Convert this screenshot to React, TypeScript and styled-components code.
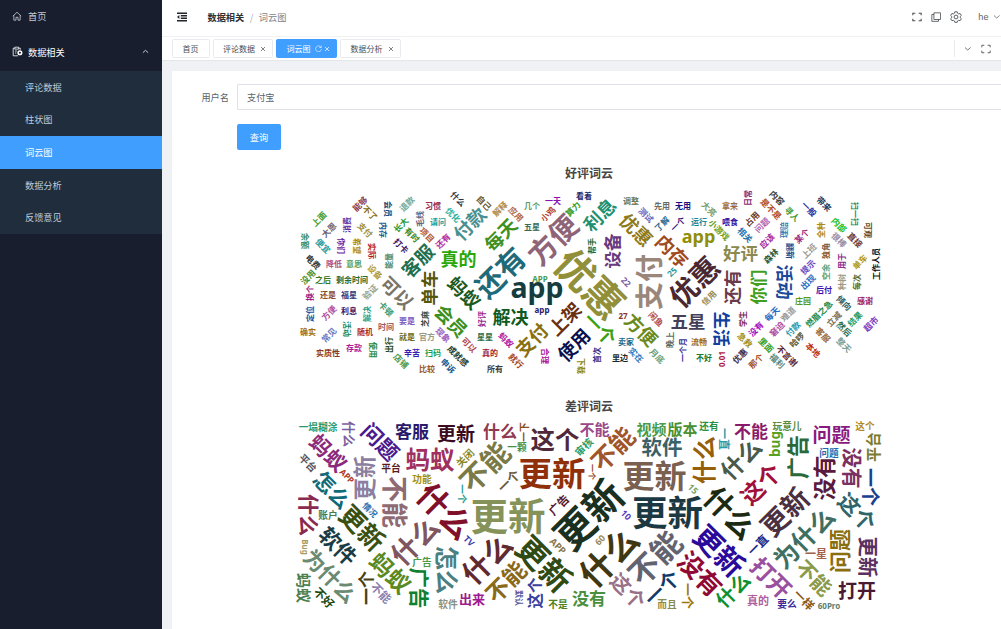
import React from 'react';
import styled, { createGlobalStyle } from 'styled-components';

const Global = createGlobalStyle`
  * { box-sizing: border-box; }
  html, body { margin: 0; padding: 0; overflow: hidden; }
  body { font-family: 'Noto Sans CJK SC', sans-serif; font-size: 9.2px; color: #606266; }
`;

const Shell = styled.div`
  display: flex;
  width: 1001px;
  height: 629px;
  overflow: hidden;
`;

const Sidebar = styled.nav`
  flex: 0 0 162px;
  background: #191e2f;
  color: #c3c8d2;
`;

const MenuRow = styled.div<{ $strong?: boolean }>`
  display: flex;
  align-items: center;
  gap: ${p => (p.$strong ? 5 : 6)}px;
  height: ${p => (p.$strong ? 39 : 32)}px;
  padding: 0 13.5px 0 12px;
  color: ${p => (p.$strong ? '#ffffff' : '#c3c8d2')};
  svg:last-child:not(:first-child) { margin-left: auto; }
`;

const SubMenu = styled.div`
  display: flex;
  flex-direction: column;
  height: 163px;
  background: #1f2d3d;
`;

const SubItem = styled.div<{ $active?: boolean }>`
  flex: 1;
  display: flex;
  align-items: center;
  padding: 0 0 1px 25px;
  color: ${p => (p.$active ? '#ffffff' : '#bfcbd9')};
  background: ${p => (p.$active ? '#409eff' : 'transparent')};
`;

const Main = styled.main`
  flex: 1;
  min-width: 0;
  display: flex;
  flex-direction: column;
  background: #eff1f5;
`;

const Header = styled.header`
  display: flex;
  align-items: center;
  height: 37px;
  padding: 0 1px 2px 14px;
  background: #fff;
  border-bottom: 1px solid #f0f1f3;
`;

const Crumbs = styled.div`
  display: flex;
  gap: 5.5px;
  margin-left: 19.5px;
  color: #7b7e84;
  b { color: #303133; font-weight: 700; }
  i { color: #a8abb2; font-style: normal; }
`;

const Tools = styled.div`
  display: flex;
  align-items: center;
  gap: 9px;
  margin-left: auto;
  color: #4a4d52;
`;

const User = styled.span`
  display: flex;
  align-items: center;
  gap: 4px;
  margin-left: 7.5px;
  color: #606266;
  font-family: 'Liberation Sans', sans-serif;
  white-space: nowrap;
`;

const TabBar = styled.div`
  display: flex;
  align-items: center;
  gap: 3px;
  height: 24px;
  padding-left: 10px;
  background: #fff;
  border-bottom: 1px solid #e4e6ea;
`;

const Tab = styled.div<{ $active?: boolean; $w: number }>`
  display: flex;
  align-items: center;
  justify-content: space-between;
  width: ${p => p.$w}px;
  height: 18.5px;
  padding: 0 6px 0 9.5px;
  border: 1px solid ${p => (p.$active ? '#409eff' : '#e8eaee')};
  border-radius: 1.5px;
  background: ${p => (p.$active ? '#409eff' : '#fff')};
  color: ${p => (p.$active ? '#fff' : '#4c4f55')};
  font-size: 8px;
  white-space: nowrap;
`;

const TabIcons = styled.span`
  display: flex;
  align-items: center;
  gap: 2px;
`;

const TabTools = styled.div`
  display: flex;
  align-items: center;
  gap: 10px;
  height: 17px;
  margin-left: auto;
  padding: 0 10px 0 9px;
  border-left: 1px solid #e8eaee;
  color: #606266;
`;

const Card = styled.section`
  flex: 1;
  margin: 10px 0 0 10px;
  padding-top: 13px;
  background: #fff;
  overflow: hidden;
`;

const FormRow = styled.div`
  display: flex;
  align-items: center;
  height: 26px;
  margin-bottom: 14px;
`;

const Label = styled.label`
  width: 65px;
  padding-right: 8px;
  text-align: right;
`;

const Input = styled.div`
  flex: 1;
  display: flex;
  align-items: center;
  height: 26px;
  padding-left: 9px;
  border: 1px solid #dfe2e8;
  border-right: 0;
  border-radius: 2px 0 0 2px;
`;

const Button = styled.button`
  width: 44px;
  height: 26px;
  margin-left: 65px;
  padding: 0;
  border: 0;
  border-radius: 2px;
  background: #409eff;
  color: #fff;
  font: inherit;
`;

const Chart = styled.svg`
  display: block;
  width: 829px;
  height: 233px;
  font-family: 'Noto Sans', 'Noto Sans CJK SC', sans-serif;
  font-weight: 700;
`;

const Charts = styled.div`
  margin-top: -4px;
`;

type Word = [string, number, number, number, number, string];

const praise: Word[] = [
  ['能够', 360, 204, 8, -45, '#8b3a4a'], ['不了', 370, 213, 8, 45, '#8a6d14'], ['会员', 388, 209, 8, 90, '#1a4a7a'],
  ['退款', 407, 204, 8, -45, '#6fa898'], ['习惯', 433, 206, 8, 0, '#9a2a4a'], ['毛线', 420, 219, 8, -90, '#5a6a8a'],
  ['请问', 438, 222, 8, 0, '#1aa0a0'], ['上面', 319, 219, 8, -45, '#4aa030'], ['大恩', 329, 230, 8, -45, '#6a6070'],
  ['消费', 347, 225, 8, -90, '#5a2aa0'], ['支付', 365, 230, 8, 45, '#a09040'], ['内存', 383, 230, 8, 90, '#1a5a90'],
  ['长大', 401, 225, 8, -45, '#2a9a30'], ['有时', 412, 235, 8, 45, '#3a8a2a'], ['项目', 427, 235, 8, 45, '#b05a3a'],
  ['余额', 305, 241, 8, 90, '#2a8a6a'], ['便宜', 323, 246, 8, 45, '#2a9a9a'], ['你们', 341, 246, 8, 90, '#6a20a0'],
  ['希望', 357, 246, 8, 90, '#b08a10'], ['实际', 372, 251, 8, 90, '#b01a2a'], ['打卡', 401, 246, 8, 45, '#3a1060'],
  ['还有', 443, 241, 8, -45, '#b02aa0'], ['客服', 418, 261, 17.5, -45, '#1f7050'], ['能量', 389, 261, 8, -90, '#4a8a70'],
  ['电费', 313, 262, 8, 45, '#303a3a'], ['降低', 334, 264, 8, 0, '#b05080'], ['意思', 354, 264, 8, 0, '#50a060'],
  ['没用', 308, 277, 8, -45, '#4a9030'], ['之后', 323, 280, 8, 0, '#3a7a20'], ['剩余时间', 352, 280, 8, 0, '#2a6a2a'],
  ['设备', 375, 272, 8, 45, '#b09a40'], ['可以', 397, 293, 17.5, 45, '#7a7568'], ['单车', 430, 288, 17.5, -90, '#55560a'],
  ['换个', 310, 293, 8, -90, '#a01a80'], ['还是', 328, 295, 8, 0, '#8a4a30'], ['福星', 349, 295, 8, 0, '#2a3a80'],
  ['验证', 370, 292, 8, -45, '#90a088'], ['定位', 310, 314, 8, -90, '#1a50a0'], ['方便', 329, 313, 8, -45, '#b050a0'],
  ['利息', 349, 311, 8, 0, '#4a1060'], ['解决', 367, 314, 8, -90, '#2aa08a'], ['卡顿', 386, 309, 8, 45, '#3a9a70'],
  ['确实', 308, 332, 8, 0, '#a07010'], ['常见', 329, 335, 8, -45, '#6a7ac0'], ['活动', 347, 329, 8, 90, '#1a8a60'],
  ['随机', 365, 332, 8, 0, '#b02a1a'], ['时间', 386, 327, 8, 0, '#9a5a60'], ['要是', 407, 321, 8, 0, '#7a5ac0'],
  ['芝麻', 425, 319, 8, -90, '#3a4a3a'], ['实质性', 328, 353, 8, 0, '#8a3a20'], ['存款', 354, 348, 8, 0, '#b01a90'],
  ['使用', 373, 350, 8, 90, '#2a8a40'], ['出行', 389, 345, 8, -90, '#2a4a20'], ['就是', 407, 337, 8, 0, '#6a6a20'],
  ['官方', 427, 337, 8, 0, '#9a9a80'], ['店铺', 401, 361, 8, 45, '#4a9a50'], ['辛苦', 412, 353, 8, 0, '#3a1ab0'],
  ['扫码', 433, 353, 8, 0, '#1aa050'], ['比较', 427, 369, 8, 0, '#a05a20'],
  ['什么', 458, 199, 8, 45, '#303040'], ['优化', 453, 215, 8, 45, '#2ab0a0'], ['付款', 470, 224, 17.5, -45, '#4a9090'],
  ['自己', 484, 203, 8, 45, '#6a5a30'], ['解释', 500, 209, 8, -45, '#b08a4a'], ['应用', 516, 214, 8, 45, '#b06a50'],
  ['几个', 532, 206, 8, 0, '#5a9a6a'], ['一天', 553, 201, 8, 0, '#8a10b0'], ['算力', 573, 209, 8, -45, '#3a9a1a'],
  ['小鸡', 548, 214, 8, -45, '#b0402a'], ['五星', 532, 227, 8, 0, '#3a6a50'], ['每天', 501, 235, 17.5, -45, '#3f9020'],
  ['真的', 458.5, 259, 18, 0, '#2aa80a'], ['还有', 500.5, 272.5, 27, -45, '#1f6a78'], ['方便', 553, 240, 27, -45, '#8f6478'],
  ['优惠', 589.5, 284, 37.5, 45, '#918f3a'], ['蚂蚁', 464, 293, 17.5, 45, '#1a5a20'], ['app', 537, 292, 28.5, 0, '#153d40'],
  ['APP', 540, 279, 8, 0, '#4a9a50'], ['app', 542, 311, 8, 0, '#2a1a70'], ['会员', 451, 321, 17.5, 45, '#3a9020'],
  ['好评', 482, 319, 8, -90, '#9a2a90'], ['解决', 510.5, 317, 18, 0, '#0f5a20'], ['现象', 443, 335, 8, 45, '#9a60c0'],
  ['星星', 485, 337, 8, 0, '#1f7050'], ['蚂蚁', 506, 340, 8, 45, '#b0109a'], ['支付', 532, 340, 17.5, -45, '#8a7010'],
  ['上架', 565, 319, 17.5, -45, '#6a2f10'], ['可以', 469, 345, 8, 45, '#b04a50'], ['成就感', 458, 356, 8, 45, '#203a30'],
  ['真的', 490, 353, 8, 0, '#a01a30'], ['就行', 516, 361, 8, 45, '#a0401a'], ['合理', 545, 356, 8, 90, '#b010a0'],
  ['申诉', 448, 366, 8, 45, '#1a5a90'], ['所有', 495, 369, 8, 0, '#3a3a3a'], ['使用', 574, 345, 17.5, -45, '#0a1050'],
  ['下载', 581, 366, 8, 90, '#8a8a10'],
  ['看着', 584, 196, 8, 0, '#1a2a70'], ['利息', 600, 215, 17.5, -45, '#1f9070'], ['调整', 631, 201, 8, 0, '#6a7a5a'],
  ['测试', 646, 215, 8, 45, '#6a6ac0'], ['先用', 662, 206, 8, 0, '#6a6a60'], ['无用', 683, 206, 8, 0, '#1a1080'],
  ['大亮', 709, 209, 8, 45, '#7aa070'], ['拿来', 730, 206, 8, 0, '#a06a40'], ['优惠', 636, 230, 17.5, 45, '#8f7a1a'],
  ['了解', 662, 224, 8, -45, '#2a6a90'], ['一个', 678, 224, 8, -45, '#3a1a80'], ['运行', 699, 222, 8, 0, '#1a8a9a'],
  ['小游戏', 719, 230, 8, 45, '#6aa020'], ['喂食', 730, 222, 8, 0, '#3a10a0'], ['帮手', 592, 246, 8, -90, '#1a6a30'],
  ['设备', 613, 251, 17.5, -90, '#6a3a80'], ['内存', 672, 251, 17.5, 45, '#a04a20'], ['app', 698.5, 239, 18, 0, '#8f8f0a'],
  ['好评', 740.5, 254, 17.5, 0, '#8a8a50'], ['支付', 649.5, 282, 28, -90, '#9a877a'], ['25', 672, 272, 8, -45, '#2a9aa0'],
  ['22', 626, 282, 8, 45, '#7a5aa0'], ['优惠', 694.5, 282, 27, -45, '#4a2832'], ['信用', 709, 298, 8, -45, '#9a8a50'],
  ['27', 623, 316, 8, 0, '#8a3a2a'], ['方便', 641, 330, 17.5, 45, '#6a8a20'], ['一个', 600, 329, 17.5, 45, '#3aa010'],
  ['闲鱼', 656, 319, 8, 45, '#b05050'], ['五星', 688, 322, 17.5, 0, '#453f58'], ['生活', 721, 329, 17.5, 90, '#0f40a0'],
  ['卖家', 626, 342, 8, 0, '#1a6a8a'], ['首次', 597, 355, 8, -90, '#3a2a80'], ['里边', 620, 358, 8, 0, '#1a2a2a'],
  ['实在', 636, 355, 8, 45, '#2a7ac0'], ['月底', 657, 356, 8, 45, '#6aa07a'], ['晚上', 670, 340, 8, -90, '#5a6a60'],
  ['一个月', 683, 350, 8, -90, '#3a3090'], ['流畅', 699, 342, 8, 0, '#a06a20'], ['不好', 704, 358, 8, 0, '#1a7a30'],
  ['0.01', 722, 359, 8, -90, '#b01a40'],
  ['日常', 748, 198, 8, -90, '#8a2a70'], ['内容', 777, 198, 8, 45, '#3a3a3a'], ['是不是', 771, 209, 8, 45, '#b04a20'],
  ['占用', 752, 219, 8, -45, '#6a3a2a'], ['问题', 762, 225, 8, -45, '#b060b0'], ['寻人', 792, 214, 8, 45, '#3a9a30'],
  ['一般', 809, 209, 8, 45, '#1a2aa0'], ['带来', 824, 204, 8, 45, '#1a3a5a'], ['相关', 745, 235, 8, 45, '#1a70b0'],
  ['应该', 767, 241, 8, -45, '#a020a0'], ['理赔', 784, 230, 8, -90, '#3a7ab0'], ['某个', 802, 236, 8, -45, '#9a2a80'],
  ['全种', 821, 230, 8, -90, '#b08a10'], ['内部', 839, 225, 8, 45, '#1ac01a'], ['扫一扫', 855, 214, 8, 90, '#1a8a5a'],
  ['森林', 771, 256, 8, -45, '#2a5a3a'], ['翻新', 790, 251, 8, 90, '#1a4a8a'], ['上班', 809, 251, 8, -45, '#9a9a90'],
  ['独角', 826, 251, 8, -90, '#8a5a30'], ['很棒', 839, 240, 8, 45, '#9a8aa0'], ['直接', 855, 240, 8, 45, '#6a3a3a'],
  ['可观', 868, 230, 8, 90, '#6a4a1a'], ['还有', 733, 287, 17.5, -90, '#6a3a4a'], ['你们', 759, 287, 17.5, -90, '#3fa020'],
  ['活动', 784, 282, 17.5, 90, '#1a4a9a'], ['提示', 808, 267, 8, -45, '#6a4ac0'], ['空余', 826, 272, 8, -90, '#4aa080'],
  ['用于', 842, 261, 8, -90, '#8a2a8a'], ['单车', 860, 262, 8, -45, '#b09a1a'], ['工作人员', 876, 264, 8, -90, '#101010'],
  ['出现', 808, 282, 8, -45, '#2a6ac0'], ['后付', 824, 290, 8, 0, '#3a10b0'], ['种树', 842, 282, 8, -90, '#a09a80'],
  ['每次', 857, 282, 8, -90, '#5a6a20'], ['庄园', 803, 301, 8, 0, '#5a9a20'], ['倾向', 844, 303, 8, 45, '#2a5a5a'],
  ['感谢', 865, 301, 8, 0, '#a01a60'], ['学生', 743, 319, 8, -90, '#7a2a5a'], ['每天', 772, 314, 8, -45, '#2a6ac0'],
  ['难道', 788, 314, 8, -45, '#9a9a9a'], ['燃眉之急', 819, 314, 8, -45, '#1a8a4a'], ['立减', 834, 319, 8, -45, '#7a6a50'],
  ['结果', 855, 319, 8, -45, '#2a9a60'], ['超市', 871, 324, 8, -45, '#7a3ac0'], ['没有', 756, 329, 8, -45, '#a010c0'],
  ['窘迫', 777, 329, 8, -45, '#b050a0'], ['付款', 793, 329, 8, -45, '#1a9ab0'], ['急救', 745, 340, 8, 45, '#a09020'],
  ['里面', 766, 345, 8, 45, '#3aa02a'], ['哈啰', 797, 340, 8, -45, '#5a5a3a'], ['客服', 823, 335, 8, 45, '#9a6a3a'],
  ['然后', 844, 329, 8, 45, '#1a6a50'], ['整天', 844, 345, 8, 45, '#7aa09a'], ['优惠', 740, 356, 8, -45, '#3a2a4a'],
  ['那个', 756, 361, 8, -45, '#a0502a'], ['福利', 777, 361, 8, 45, '#5a8a80'], ['不言谢', 787, 356, 8, 45, '#5a1a30'],
  ['本地', 813, 350, 8, 45, '#c02a0a'],
];

const complaints: Word[] = [
  ['一塌糊涂', 318, 427, 9.7, 0, '#2a9a70'], ['什么', 349, 434, 13, 90, '#7a60a0'], ['问题', 380, 442, 20, 45, '#4a1a90'],
  ['客服', 412, 432, 17, 0, '#2a1a6a'], ['蚂蚁', 328, 453, 20, 45, '#8a2a7a'], ['平台', 308, 463, 9.7, 45, '#5a5560'],
  ['怎么', 332, 490, 20, 45, '#0f6a7a'], ['APP', 347, 476, 8, 45, '#b03a2a'], ['更新', 365, 478, 22.5, -90, '#8a7fa0'],
  ['平台', 391, 468, 9.7, 0, '#5a1a1a'], ['蚂蚁', 430, 460, 24.5, 0, '#a03060'], ['功能', 422, 479, 9.7, 0, '#a09010'],
  ['不能', 395, 502, 26, 90, '#8f6a72'], ['什么', 445, 511, 30, 45, '#80102a'], ['什么', 415, 541, 26, -45, '#7f5560'],
  ['什么', 309, 515, 21, 90, '#8a2a50'], ['账户', 328, 515, 9.7, 0, '#4a7a50'], ['情况', 370, 510, 8, 45, '#2a70b0'],
  ['更新', 362, 528, 24.5, 45, '#3a5010'], ['软件', 338, 546, 20.5, 45, '#1a3d45'], ['Bug', 305, 547, 8, 90, '#a89a60'],
  ['为什么', 330, 576, 20.5, 45, '#6a8a72'], ['蚂蚁', 304, 588, 15, 90, '#4a8050'], ['不好', 324, 598, 11, 45, '#1a4a10'],
  ['一个', 367, 588, 17, -90, '#4a4010'], ['不能', 381, 593, 11, 45, '#8a80b0'], ['蚂蚁', 390, 573, 22, 45, '#5a8a20'],
  ['广告', 422, 562, 9.7, 0, '#4a9a4a'], ['广告', 419, 588, 20.5, 90, '#0f8030'],
  ['更新', 456, 434, 19, 0, '#3a0a20'], ['什么', 500, 432, 17, 0, '#8f3a50'], ['一下', 524, 432, 9.7, -90, '#8a4a1a'],
  ['这个', 555, 440, 24.5, 0, '#50283a'], ['不能', 485, 467, 27, -45, '#7a7a48'], ['一颗', 517, 447, 9.7, 0, '#4a9040'],
  ['关闭', 465, 458, 9.7, -45, '#8a8a2a'], ['一个', 462, 494, 9.7, 90, '#2aa090'], ['一个', 509, 481, 12, -45, '#6a5a3a'],
  ['更新', 552, 474, 33.5, 0, '#8f300a'], ['更新', 508, 516, 37.5, 0, '#85935a'], ['广告', 559, 505, 11, -45, '#5a1a30'],
  ['TV', 469, 541, 8.5, 45, '#3a3ab0'], ['什么', 487, 559, 27, -45, '#5f2a30'], ['怎么', 447, 570, 24, 90, '#4a8082'],
  ['APP', 558, 546, 9, 45, '#8a7a50'], ['更新', 544, 564, 30, 45, '#2f4a12'], ['不能', 506, 582, 22, -45, '#8a6a1a'],
  ['软件', 448, 604, 9.7, 0, '#8a9080'], ['出来', 472, 599, 13, 0, '#a01a90'], ['默认', 519, 598, 8, 90, '#5a5aa0'],
  ['这个', 535, 593, 15.5, -90, '#3a40a0'], ['不是', 558, 604, 9.7, 0, '#4a8020'], ['没有', 589, 599, 17, 0, '#4a9040'],
  ['不能', 594.5, 429, 15, 0, '#9a4a8a'], ['审核', 584, 447, 9.7, -45, '#2aa070'], ['不能', 613, 449, 23.5, -45, '#a0552a'],
  ['一个', 592, 472, 8, 90, '#8f4a2a'], ['视频', 651.5, 429, 15, 0, '#4a9a4a'], ['版本', 682.5, 429, 15, 0, '#4a9030'],
  ['还有', 709, 426, 9.7, 0, '#2a9040'], ['软件', 662, 447, 20.5, 0, '#3a6068'], ['什么', 704, 460, 24, -90, '#96600a'],
  ['一直', 724, 439, 11, 90, '#2a9aa8'], ['更新', 654.5, 476, 32, 0, '#7a6050'], ['15', 693, 489, 8.5, 45, '#7aa060'],
  ['更新', 589, 515, 37.5, -45, '#1a3020'], ['10', 626, 515, 8.5, 45, '#5a3ac0'], ['更新', 667.5, 513, 35.5, 0, '#1c3842'],
  ['60', 600, 540, 8.5, -45, '#9a8a5a'], ['什么', 609, 557, 32, -45, '#3f3812'], ['不能', 655, 558, 29, -45, '#62636f'],
  ['更新', 719, 551, 27.5, 45, '#2a0a9a'], ['没有', 700, 574, 24, 45, '#8f0a35'], ['这个', 628, 591, 19, 45, '#9a7088'],
  ['一个', 662, 588, 19, -45, '#0f3a6a'], ['而且', 667, 604, 9.7, 0, '#8a8a4a'], ['一个', 688, 596, 13, 90, '#a07a10'],
  ['什么', 733, 590, 18.5, -45, '#0f9030'],
  ['不能', 751, 432, 17, 0, '#8a1a6a'], ['玩意儿', 787, 426, 9.7, 0, '#5a8a3a'], ['什么', 741, 459, 22, -45, '#4a5a4a'],
  ['bug', 777, 444, 13.5, -90, '#5aa020'], ['广告', 798, 457, 22, -90, '#2a6a3a'], ['问题', 831.5, 435, 19, 0, '#8a1a80'],
  ['问题', 829, 453, 9.7, 0, '#1f6ab0'], ['这个', 865, 426, 9.7, 0, '#b08a2a'], ['平台', 873, 447, 15, -90, '#7a7a30'],
  ['这个', 761, 484, 22, -45, '#a0103a'], ['没有', 825, 478, 22.5, -90, '#5a1a40'], ['没有', 852, 468, 20.5, 90, '#7a3060'],
  ['一个', 870, 487, 19, 90, '#1a3f90'], ['什么', 730, 513, 28, 45, '#1c2a12'], ['更新', 785, 512, 26, -45, '#4a3040'],
  ['为什么', 804, 538, 23.5, -45, '#3f6f62'], ['这个', 857, 512, 20.5, 45, '#2f6468'], ['一直', 758, 545, 11, -45, '#1a2a8a'],
  ['打开', 771, 578, 22, 45, '#9a50a0'], ['一星', 816, 554, 11, 0, '#a0604a'], ['不能', 814, 578, 19, 45, '#8a9a4a'],
  ['问题', 840, 551, 22, -90, '#8a6f10'], ['更新', 868, 557, 20.5, 90, '#5a3060'], ['打开', 857, 591, 19, 0, '#4a1a30'],
  ['真的', 758, 601, 11, 0, '#b060a0'], ['要么', 787, 604, 9.7, 0, '#3a2a9a'], ['一样', 804, 600, 11, 45, '#8a5a1a'],
  ['60Pro', 829, 606, 8, 0, '#5a8070'],
];

const lift = (text: string) => (/^[a-z]+$/.test(text) ? 0.2 : 0.37);

// Diagonal words are set slightly larger than level ones.
const fitted = (size: number, turn: number) => (Math.abs(turn) === 45 ? size * 1.055 : size);

function WordCloud({ title, top, words }: { title: string; top: number; words: Word[] }) {
  return (
    <Chart viewBox={`172 ${top} 829 233`}>
      <text x={589} y={top + 17.5} fontSize={12} fill="#464646" textAnchor="middle">{title}</text>
      {words.map(([text, x, y, size, turn, color], i) => (
        <text
          key={i}
          transform={`translate(${x} ${y}) rotate(${turn})`}
          y={fitted(size, turn) * lift(text)}
          fontSize={fitted(size, turn)}
          fill={color}
          textAnchor="middle"
        >
          {text}
        </text>
      ))}
    </Chart>
  );
}

const Icon = ({ size = 10, d, width = 1 }: { size?: number; d: string; width?: number }) => (
  <svg width={size} height={size} viewBox="0 0 12 12" fill="none" stroke="currentColor" strokeWidth={width}>
    <path d={d} />
  </svg>
);

const HOME = 'M1 6.2 6 1.5l5 4.7M2.2 5.2V11h2.6V7.5h2.4V11h2.6V5.2';
const UP = 'M1.5 8 6 4l4.5 4';
const DOWN = 'M1.5 4 6 8l4.5-4';
const CLOSE = 'M2 2l8 8M10 2l-8 8';
const FULL = 'M1 4V1.5h3M8 1.5h3V4M11 8v2.5H8M4 10.5H1V8';
const COPY = 'M3.5 1h8v8h-8zM3.5 3H1v8.2h8V9';
const RELOAD = 'M10.3 4A5 5 0 1 0 11 7M10.6 1v3.3H7.5';

const DataIcon = () => (
  <svg width="11" height="11" viewBox="0 0 11 11" fill="none" stroke="currentColor" strokeWidth="0.8">
    <path d="M6 9.8H1.2V2.2h1.6M6.7 2.2h1.6v1.6M2.8 1.2h3.9v1.9H2.8zM2.9 5h2M2.9 7h1.5" />
    <circle cx="7.9" cy="6.8" r="1.8" strokeWidth="1.5" />
  </svg>
);

const FoldIcon = () => (
  <svg width="12" height="10" viewBox="0 0 12 10" fill="none" stroke="#222529" strokeWidth="1.4">
    <path d="M1 1.2h10M4.8 3.7H11M4.8 6.2H11M1 8.8h10" />
    <path d="M3.4 3v4L1 5z" fill="#222529" stroke="none" />
  </svg>
);

const GearIcon = () => (
  <svg width="12" height="12" viewBox="0 0 12 12" fill="none" stroke="currentColor" strokeWidth="0.9">
    <path d="M4.8.8h2.4l.4 1.5 1 .6 1.5-.4 1.2 2-1.1 1.1v1l1.1 1.1-1.2 2-1.5-.4-1 .6-.4 1.4H4.8l-.4-1.4-1-.6-1.5.4-1.2-2 1.1-1.1v-1L.7 4.5l1.2-2 1.5.4 1-.6z" />
    <circle cx="6" cy="6" r="1.9" />
  </svg>
);

export default function App() {
  return (
    <>
      <Global />
      <Shell>
        <Sidebar>
          <MenuRow><Icon d={HOME} /><span>首页</span></MenuRow>
          <MenuRow $strong><DataIcon /><span>数据相关</span><Icon size={7} d={UP} width={1.3} /></MenuRow>
          <SubMenu>
            <SubItem>评论数据</SubItem>
            <SubItem>柱状图</SubItem>
            <SubItem $active>词云图</SubItem>
            <SubItem>数据分析</SubItem>
            <SubItem>反馈意见</SubItem>
          </SubMenu>
        </Sidebar>
        <Main>
          <Header>
            <FoldIcon />
            <Crumbs><b>数据相关</b><i>/</i><span>词云图</span></Crumbs>
            <Tools>
              <Icon d={FULL} width={1.3} />
              <Icon d={COPY} />
              <GearIcon />
              <User>he <Icon size={7.5} d={DOWN} width={1.2} /></User>
            </Tools>
          </Header>
          <TabBar>
            <Tab $w={37.5}>首页</Tab>
            <Tab $w={60.5}>评论数据<Icon size={6} d={CLOSE} width={1.4} /></Tab>
            <Tab $w={61} $active>词云图<TabIcons><Icon size={7} d={RELOAD} /><Icon size={6} d={CLOSE} width={1.4} /></TabIcons></Tab>
            <Tab $w={60.5}>数据分析<Icon size={6} d={CLOSE} width={1.4} /></Tab>
            <TabTools>
              <Icon size={7.5} d={DOWN} width={1.4} />
              <Icon d={FULL} width={1.2} />
            </TabTools>
          </TabBar>
          <Card>
            <FormRow><Label>用户名</Label><Input>支付宝</Input></FormRow>
            <FormRow><Button>查询</Button></FormRow>
            <Charts>
              <WordCloud title="好评词云" top={160} words={praise} />
              <WordCloud title="差评词云" top={393} words={complaints} />
            </Charts>
          </Card>
        </Main>
      </Shell>
    </>
  );
}
